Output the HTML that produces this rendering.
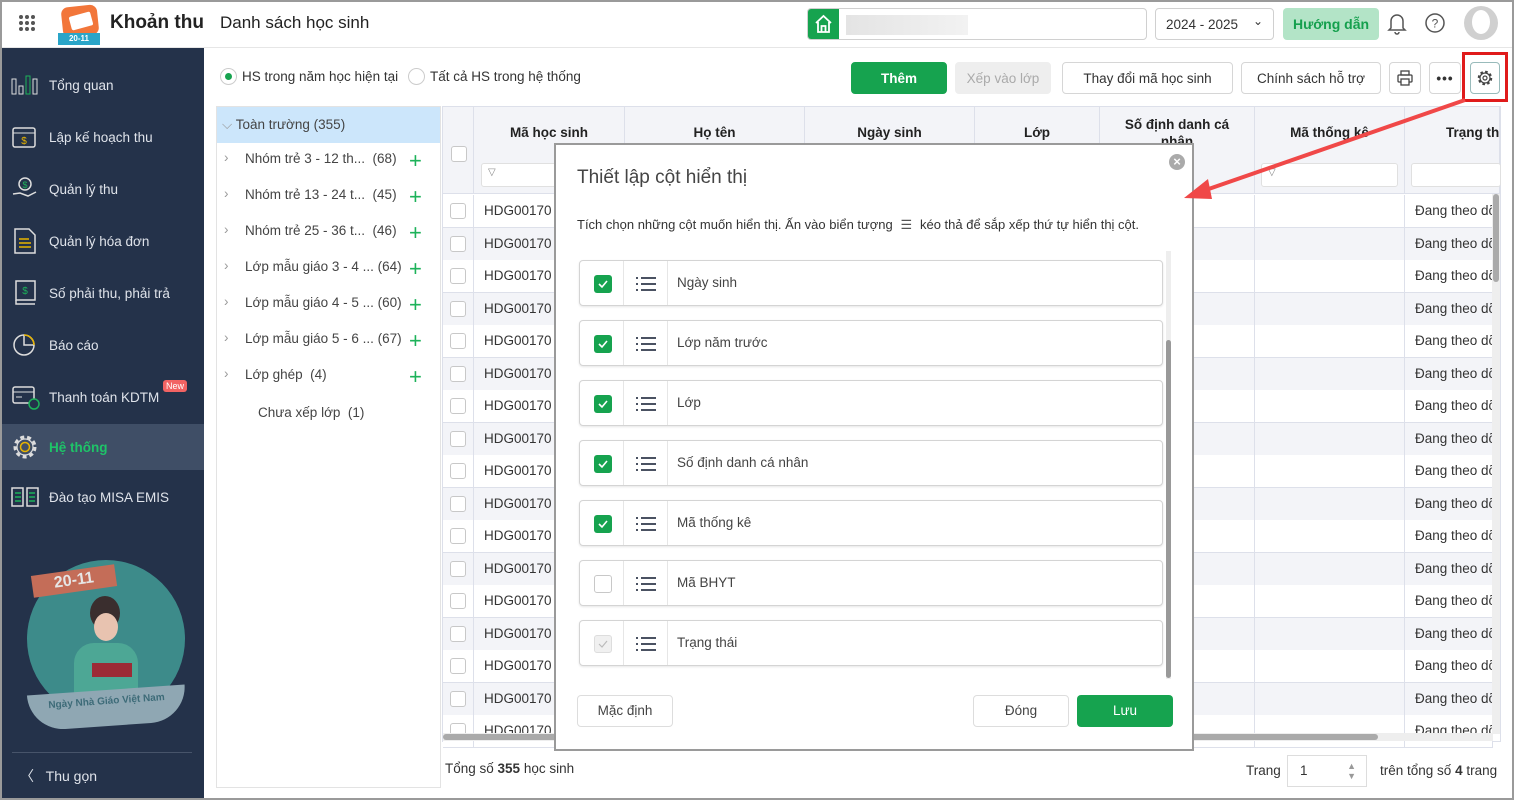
<!DOCTYPE html>
<html><head><meta charset="utf-8"><style>
*{box-sizing:border-box;margin:0;padding:0}
body{width:1514px;height:800px;overflow:hidden;font-family:"Liberation Sans",sans-serif;font-size:13px;color:#333;background:#fff;position:relative}
.frame{position:absolute;inset:0;border:2px solid #9a9a9a;pointer-events:none;z-index:50}
.abs{position:absolute}
.top{left:0;top:0;width:1514px;height:48px;background:#fff;border-bottom:1px solid #e6e6e6}
.side{left:2px;top:48px;width:202px;height:750px;background:#24324a;color:#dfe3ea;font-size:13.5px}
.nav{position:absolute;left:0;width:202px;height:46px;display:flex;align-items:center}
.nav span{position:absolute;left:47px}
.nav svg{position:absolute;left:8px}
.btn{position:absolute;height:32px;border:1px solid #d6d6d6;border-radius:4px;background:#fff;display:flex;align-items:center;justify-content:center;font-size:13.5px;color:#333}
.th{position:absolute;top:107px;height:87px;background:#f3f4f8;border-right:1px solid #dde0ea;border-bottom:1px solid #dde0ea;font-weight:bold;color:#222;font-size:13.5px;text-align:center}
.filt{position:absolute;top:163px;height:24px;background:#fff;border:1px solid #e0e0e0;border-radius:3px}
.row{position:absolute;left:443px;width:1050px;height:33px;border-bottom:1px solid #dde0ea}
.cell{position:absolute;top:0;height:32px;border-right:1px solid #dde0ea;line-height:32px;padding-left:10px;font-size:13.5px;color:#333;white-space:nowrap;overflow:hidden}
.cb{position:absolute;width:16px;height:16px;border:1px solid #c8c8c8;border-radius:3px;background:#fff}
.tree{position:absolute;left:230px;font-size:13.5px;color:#444}
.plus{position:absolute;left:409px;color:#1db25a;font-size:22px;font-weight:300;line-height:1}
.item{position:absolute;left:579px;width:584px;height:46px;border:1px solid #d4d4d4;border-radius:4px;background:#fff;box-shadow:0 1px 2px rgba(0,0,0,.1)}
.item .c1{position:absolute;left:0;top:0;width:44px;height:44px;border-right:1px solid #e6e6e6}
.item .c2{position:absolute;left:44px;top:0;width:44px;height:44px;border-right:1px solid #e6e6e6}
.item .t{position:absolute;left:97px;top:14px;font-size:13.5px;color:#444}
.gcb{position:absolute;left:14px;top:14px;width:18px;height:18px;border-radius:3px;background:#16a34f}
</style></head><body>
<div class="frame"></div>
<!-- top bar -->
<div class="abs top">
 <div class="abs" style="left:19px;top:15px;width:16px;height:16px;display:grid;grid-template-columns:repeat(3,4px);gap:2px">
  <i style="background:#555;border-radius:50%"></i><i style="background:#555;border-radius:50%"></i><i style="background:#555;border-radius:50%"></i><i style="background:#555;border-radius:50%"></i><i style="background:#555;border-radius:50%"></i><i style="background:#555;border-radius:50%"></i><i style="background:#555;border-radius:50%"></i><i style="background:#555;border-radius:50%"></i><i style="background:#555;border-radius:50%"></i></div>
 <div class="abs" style="left:62px;top:6px;width:36px;height:30px;background:#f2763a;border-radius:7px;transform:rotate(-6deg)"></div>
 <div class="abs" style="left:70px;top:14px;width:22px;height:14px;background:#fff;border-radius:2px;transform:rotate(-15deg)"></div>
 <div class="abs" style="left:58px;top:33px;width:42px;height:12px;background:#2aa5c8;color:#fff;font-size:8px;font-weight:bold;text-align:center;line-height:12px">20-11</div>
 <div class="abs" style="left:110px;top:12px;font-size:19px;font-weight:bold;color:#222">Khoản thu</div>
 <div class="abs" style="left:220px;top:13px;font-size:17px;color:#222">Danh sách học sinh</div>
 <div class="abs" style="left:807px;top:8px;width:340px;height:32px;border:1px solid #d0d0d0;border-radius:4px;overflow:hidden">
  <div class="abs" style="left:0;top:0;width:31px;height:30px;background:#16a34f"><svg width="31" height="30" viewBox="0 0 31 30"><path d="M8 14 L15.5 7 L23 14 M10 13 V23 H21 V13 M13.5 23 V17 H17.5 V23" stroke="#fff" stroke-width="1.8" fill="none"/></svg></div>
  <div class="abs" style="left:38px;top:6px;width:122px;height:20px;background:linear-gradient(90deg,#e4e4e4,#f2f2f2)"></div>
 </div>
 <div class="abs" style="left:1155px;top:8px;width:119px;height:32px;border:1px solid #d0d0d0;border-radius:4px;font-size:13.5px;padding:8px 0 0 10px">2024 - 2025<span style="position:absolute;right:10px;top:5px;font-size:12px">⌄</span></div>
 <div class="abs" style="left:1283px;top:8px;width:96px;height:32px;background:#b3e4c7;border-radius:4px;color:#15a04e;font-weight:bold;font-size:14px;text-align:center;line-height:32px">Hướng dẫn</div>
 <svg class="abs" style="left:1386px;top:11px" width="22" height="24" viewBox="0 0 22 24"><path d="M5 17 V10 a6 6 0 0 1 12 0 V17 L19 19 H3 Z M9 21 a2 2 0 0 0 4 0" stroke="#555" stroke-width="1.5" fill="none"/></svg>
 <svg class="abs" style="left:1424px;top:12px" width="22" height="22" viewBox="0 0 22 22"><circle cx="11" cy="11" r="9" stroke="#555" stroke-width="1.5" fill="none"/><text x="11" y="15.5" font-size="12" text-anchor="middle" fill="#555" font-family="Liberation Sans">?</text></svg>
 <div class="abs" style="left:1464px;top:6px;width:34px;height:34px;border-radius:50%;background:#d0d0d0;overflow:hidden"><div style="position:absolute;left:8px;top:4px;width:18px;height:24px;border-radius:50%;background:#fff"></div></div>
</div>
<!-- sidebar -->
<div class="abs side">
 <div class="nav" style="top:14px"><svg width="30" height="22" viewBox="0 0 30 22"><rect x="2" y="5" width="4" height="15" stroke="#ddd" fill="none"/><rect x="9" y="12" width="4" height="8" stroke="#ddd" fill="none"/><rect x="16" y="2" width="4" height="18" stroke="#1db25a" fill="none"/><rect x="23" y="5" width="4" height="15" stroke="#ddd" fill="none"/></svg><span>Tổng quan</span></div>
 <div class="nav" style="top:66px"><svg width="30" height="26" viewBox="0 0 30 26"><rect x="3" y="4" width="22" height="19" rx="2" stroke="#ddd" stroke-width="1.5" fill="none"/><path d="M3 9H25" stroke="#ddd"/><text x="14" y="20" font-size="10" text-anchor="middle" fill="#e8b400">$</text></svg><span>Lập kế hoạch thu</span></div>
 <div class="nav" style="top:118px"><svg width="30" height="26" viewBox="0 0 30 26"><circle cx="15" cy="8" r="6" stroke="#ddd" stroke-width="1.5" fill="none"/><text x="15" y="12" font-size="9" text-anchor="middle" fill="#1db25a">$</text><path d="M3 18 L10 17 L18 20 L26 16" stroke="#ddd" stroke-width="1.5" fill="none"/></svg><span>Quản lý thu</span></div>
 <div class="nav" style="top:170px"><svg width="30" height="28" viewBox="0 0 30 28"><path d="M5 2H19L25 8V26H5Z" stroke="#ddd" stroke-width="1.5" fill="none"/><path d="M9 12H19M9 16H21M9 20H21" stroke="#e8b400" stroke-width="1.5"/></svg><span>Quản lý hóa đơn</span></div>
 <div class="nav" style="top:222px"><svg width="30" height="28" viewBox="0 0 30 28"><rect x="6" y="2" width="19" height="19" stroke="#ddd" stroke-width="1.5" fill="none"/><path d="M6 21V25H25" stroke="#ddd" stroke-width="1.5" fill="none"/><text x="15" y="15" font-size="10" text-anchor="middle" fill="#1db25a">$</text></svg><span>Số phải thu, phải trả</span></div>
 <div class="nav" style="top:274px"><svg width="30" height="26" viewBox="0 0 30 26"><circle cx="14" cy="13" r="10" stroke="#ddd" stroke-width="1.5" fill="none"/><path d="M14 3V13H24" stroke="#ddd" stroke-width="1.5" fill="none"/><path d="M14 3A10 10 0 0 1 24 13" stroke="#e8b400" stroke-width="1.5" fill="none"/></svg><span>Báo cáo</span></div>
 <div class="nav" style="top:326px"><svg width="30" height="28" viewBox="0 0 30 28"><rect x="3" y="4" width="21" height="16" rx="2" stroke="#ddd" stroke-width="1.5" fill="none"/><path d="M3 9H24M6 14H12" stroke="#ddd"/><circle cx="24" cy="21" r="5" stroke="#1db25a" stroke-width="1.5" fill="#24324a"/></svg><span>Thanh toán KDTM</span><div style="position:absolute;left:161px;top:6px;background:#f26363;color:#fff;font-size:9px;padding:1px 3px;border-radius:3px">New</div></div>
 <div class="nav" style="top:376px;background:#3f4e66"><svg width="30" height="30" viewBox="0 0 30 30"><circle cx="15" cy="15" r="10" stroke="#ddd" stroke-width="3" stroke-dasharray="4 3" fill="none"/><circle cx="15" cy="15" r="8" stroke="#ddd" stroke-width="1.2" fill="none"/><circle cx="15" cy="15" r="4.5" stroke="#e8b400" stroke-width="1.5" fill="none"/></svg><span style="color:#1ec468;font-weight:bold">Hệ thống</span></div>
 <div class="nav" style="top:426px"><svg width="30" height="26" viewBox="0 0 30 26"><path d="M2 4H13V22H2Z M17 4H28V22H17Z" stroke="#ddd" stroke-width="1.5" fill="none"/><path d="M5 9H11M5 13H11M5 17H11M19 9H25M19 13H25M19 17H25" stroke="#1db25a" stroke-width="1.5"/></svg><span>Đào tạo MISA EMIS</span></div>
 <div class="abs" style="left:25px;top:512px;width:158px;height:158px;border-radius:50%;background:#3d8b8a"></div>
 <div class="abs" style="left:30px;top:522px;width:84px;height:22px;background:#c46d58;transform:rotate(-8deg);color:#e6e6e6;font-weight:bold;font-size:16px;text-align:center;line-height:22px">20-11</div>
 <div class="abs" style="left:88px;top:548px;width:30px;height:34px;border-radius:50%;background:#3a2e2e"></div>
 <div class="abs" style="left:92px;top:565px;width:24px;height:28px;border-radius:50%;background:#e8c3b0"></div>
 <div class="abs" style="left:72px;top:595px;width:64px;height:70px;border-radius:20px 20px 0 0;background:#4da795"></div>
 <div class="abs" style="left:90px;top:615px;width:40px;height:14px;background:#9c2b36"></div>
 <div class="abs" style="left:26px;top:642px;width:158px;height:36px;background:#8fa7b3;border-radius:0 0 80px 80px;color:#3d6b78;font-size:10px;text-align:center;padding-top:6px;font-weight:bold;transform:rotate(-4deg)">Ngày Nhà Giáo Việt Nam</div>
 <div class="abs" style="left:10px;top:704px;width:180px;height:1px;background:#47546a"></div>
 <div class="abs" style="left:18px;top:718px;font-size:14px;color:#dfe3ea">〈&nbsp;&nbsp;&nbsp;Thu gọn</div>
</div>
<!-- toolbar -->
<div class="abs" style="left:220px;top:68px;width:17px;height:17px;border:1px solid #ccc;border-radius:50%"><div style="position:absolute;left:4px;top:4px;width:7px;height:7px;border-radius:50%;background:#16a34f"></div></div>
<div class="abs" style="left:242px;top:69px;font-size:13.5px">HS trong năm học hiện tại</div>
<div class="abs" style="left:408px;top:68px;width:17px;height:17px;border:1px solid #ccc;border-radius:50%"></div>
<div class="abs" style="left:430px;top:69px;font-size:13.5px">Tất cả HS trong hệ thống</div>
<div class="btn" style="left:851px;top:62px;width:96px;background:#16a34f;border-color:#16a34f;color:#fff;font-weight:bold">Thêm</div>
<div class="btn" style="left:955px;top:62px;width:96px;background:#eee;border-color:#eee;color:#aaa">Xếp vào lớp</div>
<div class="btn" style="left:1062px;top:62px;width:171px">Thay đổi mã học sinh</div>
<div class="btn" style="left:1241px;top:62px;width:140px">Chính sách hỗ trợ</div>
<div class="btn" style="left:1389px;top:62px;width:32px"><svg width="18" height="18" viewBox="0 0 18 18"><rect x="5" y="2" width="8" height="4" stroke="#444" fill="none" stroke-width="1.3"/><rect x="2" y="6" width="14" height="7" rx="1" stroke="#444" fill="none" stroke-width="1.3"/><rect x="5" y="10" width="8" height="6" stroke="#444" fill="#fff" stroke-width="1.3"/></svg></div>
<div class="btn" style="left:1429px;top:62px;width:32px;font-weight:bold;letter-spacing:1px">•••</div>
<div class="btn" style="left:1470px;top:62px;width:30px;border-color:#9bb"><svg width="18" height="18" viewBox="0 0 18 18"><circle cx="9" cy="9" r="6" stroke="#444" stroke-width="2.5" stroke-dasharray="2.5 2.2" fill="none"/><circle cx="9" cy="9" r="5" stroke="#444" stroke-width="1.2" fill="none"/><circle cx="9" cy="9" r="2" stroke="#444" stroke-width="1.2" fill="none"/></svg></div>
<div class="abs" style="left:1462px;top:52px;width:46px;height:50px;border:3px solid #e01b1b"></div>
<!-- tree -->
<div class="abs" style="left:216px;top:106px;width:225px;height:682px;border:1px solid #e3e3e3;background:#fff"></div>
<div class="abs" style="left:217px;top:107px;width:223px;height:36px;background:#cce6fb"></div>
<div class="abs" style="left:222px;top:117px;font-size:13.5px;color:#444"><span style="color:#999">⌵</span> Toàn trường (355)</div>
<div class="tree" style="top:150px;left:224px;color:#999">›</div><div class="tree" style="top:151px;left:245px">Nhóm trẻ 3 - 12 th...&nbsp;&nbsp;(68)</div><div class="plus" style="top:150px">+</div>
<div class="tree" style="top:186px;left:224px;color:#999">›</div><div class="tree" style="top:187px;left:245px">Nhóm trẻ 13 - 24 t...&nbsp;&nbsp;(45)</div><div class="plus" style="top:186px">+</div>
<div class="tree" style="top:222px;left:224px;color:#999">›</div><div class="tree" style="top:223px;left:245px">Nhóm trẻ 25 - 36 t...&nbsp;&nbsp;(46)</div><div class="plus" style="top:222px">+</div>
<div class="tree" style="top:258px;left:224px;color:#999">›</div><div class="tree" style="top:259px;left:245px">Lớp mẫu giáo 3 - 4 ... (64)</div><div class="plus" style="top:258px">+</div>
<div class="tree" style="top:294px;left:224px;color:#999">›</div><div class="tree" style="top:295px;left:245px">Lớp mẫu giáo 4 - 5 ... (60)</div><div class="plus" style="top:294px">+</div>
<div class="tree" style="top:330px;left:224px;color:#999">›</div><div class="tree" style="top:331px;left:245px">Lớp mẫu giáo 5 - 6 ... (67)</div><div class="plus" style="top:330px">+</div>
<div class="tree" style="top:366px;left:224px;color:#999">›</div><div class="tree" style="top:367px;left:245px">Lớp ghép&nbsp; (4)</div><div class="plus" style="top:366px">+</div>
<div class="tree" style="top:405px;left:258px">Chưa xếp lớp&nbsp; (1)</div>
<!-- table -->
<div class="abs" style="left:442px;top:106px;width:1059px;height:636px;border:1px solid #dde0ea"></div>
<div class="th" style="left:443px;width:31px"><div class="cb" style="left:8px;top:39px"></div></div>
<div class="th" style="left:474px;width:151px;padding-top:18px">Mã học sinh</div>
<div class="th" style="left:625px;width:180px;padding-top:18px">Họ tên</div>
<div class="th" style="left:805px;width:170px;padding-top:18px">Ngày sinh</div>
<div class="th" style="left:975px;width:125px;padding-top:18px">Lớp</div>
<div class="th" style="left:1100px;width:155px;padding-top:9px;line-height:17px">Số định danh cá<br>nhân</div>
<div class="th" style="left:1255px;width:150px;padding-top:18px">Mã thống kê</div>
<div class="th" style="left:1405px;width:95px;padding-top:18px;text-align:left;padding-left:41px;white-space:nowrap;overflow:hidden">Trạng thái</div>
<div class="filt" style="left:481px;width:140px;font-size:10px;color:#888;padding:3px 6px">▽</div>
<div class="filt" style="left:1261px;width:137px;font-size:10px;color:#888;padding:3px 6px">▽</div>
<div class="filt" style="left:1411px;width:90px"></div>
<div id="rows"></div>
<script>
var h='';for(var i=0;i<17;i++){var y=195+i*32.5;var bg=i%2?'#f3f4f8':'#fff';
h+='<div class="row" style="top:'+y+'px;background:'+bg+'"><div class="cell" style="left:0;width:31px"><div class="cb" style="left:7px;top:8px"></div></div><div class="cell" style="left:31px;width:151px">HDG00170</div><div class="cell" style="left:182px;width:180px"></div><div class="cell" style="left:362px;width:170px"></div><div class="cell" style="left:532px;width:125px"></div><div class="cell" style="left:657px;width:155px"></div><div class="cell" style="left:812px;width:150px"></div><div class="cell" style="left:962px;width:88px">Đang theo dõi</div></div>';}
document.getElementById('rows').innerHTML=h;
</script>
<div class="abs" style="left:443px;top:733px;width:1050px;height:8px;background:#eee"></div>
<div class="abs" style="left:443px;top:734px;width:935px;height:6px;background:#aaa;border-radius:3px"></div>
<div class="abs" style="left:1492px;top:194px;width:8px;height:540px;background:#eee"></div>
<div class="abs" style="left:1493px;top:194px;width:6px;height:88px;background:#aaa;border-radius:3px"></div>
<div class="abs" style="left:445px;top:761px;font-size:13.5px">Tổng số <b>355</b> học sinh</div>
<div class="abs" style="left:1246px;top:763px;font-size:13.5px">Trang</div>
<div class="abs" style="left:1287px;top:755px;width:80px;height:32px;border:1px solid #ddd;padding:7px 12px;font-size:13.5px">1<span style="position:absolute;right:10px;top:5px;color:#999;font-size:9px;line-height:10px">▲<br>▼</span></div>
<div class="abs" style="left:1380px;top:763px;font-size:13.5px">trên tổng số <b>4</b> trang</div>
<!-- arrow -->
<svg class="abs" style="left:1180px;top:95px;z-index:5" width="290" height="110" viewBox="0 0 290 110"><path d="M285 5 L20 97" stroke="#f04848" stroke-width="4"/><path d="M4 103 L28 84 L32 104 Z" fill="#f04848"/></svg>
<!-- modal -->
<div class="abs" style="left:554px;top:143px;width:640px;height:608px;background:#fff;border:2px solid #9a9a9a;z-index:3">
 <div class="abs" style="left:613px;top:9px;width:16px;height:16px;border-radius:50%;background:#aaa;color:#fff;font-size:13px;text-align:center;line-height:16px;font-weight:bold">×</div>
 <div class="abs" style="left:21px;top:22px;font-size:19px;color:#444">Thiết lập cột hiển thị</div>
 <div class="abs" style="left:21px;top:72px;font-size:13px;color:#333;white-space:nowrap">Tích chọn những cột muốn hiển thị. Ấn vào biển tượng <span style="display:inline-block;width:20px;text-align:center;color:#555">☰</span> kéo thả để sắp xếp thứ tự hiển thị cột.</div>
 <div class="abs" style="left:610px;top:106px;width:5px;height:428px;background:#eee"></div>
 <div class="abs" style="left:610px;top:195px;width:5px;height:338px;background:#999;border-radius:3px"></div>
 <div class="abs" style="left:21px;top:550px;width:96px;height:32px;border:1px solid #ddd;border-radius:4px;text-align:center;line-height:30px;font-size:13.5px;color:#444">Mặc định</div>
 <div class="abs" style="left:417px;top:550px;width:96px;height:32px;border:1px solid #ddd;border-radius:4px;text-align:center;line-height:30px;font-size:13.5px;color:#444">Đóng</div>
 <div class="abs" style="left:521px;top:550px;width:96px;height:32px;background:#16a34f;border-radius:4px;text-align:center;line-height:32px;font-size:13.5px;color:#fff">Lưu</div>
</div>
<div id="items" style="position:absolute;left:0;top:0;z-index:4"></div>
<script>
var n=['Ngày sinh','Lớp năm trước','Lớp','Số định danh cá nhân','Mã thống kê','Mã BHYT','Trạng thái'];var s='';
var ic='<svg width="22" height="16" viewBox="0 0 22 16" style="position:absolute;left:11px;top:15px"><path d="M1 2h2M6 2h15M1 8h2M6 8h15M1 14h2M6 14h15" stroke="#4a5262" stroke-width="2"/></svg>';
for(var i=0;i<7;i++){var y=260+i*60;var c;
if(i<5)c='<div class="gcb"><svg width="18" height="18" viewBox="0 0 18 18"><path d="M5 9l3 3 5-6" stroke="#fff" stroke-width="1.6" fill="none"/></svg></div>';
else if(i==5)c='<div class="cb" style="left:14px;top:14px;width:18px;height:18px"></div>';
else c='<div class="cb" style="left:14px;top:14px;width:18px;height:18px;background:#f0f0f0;border-color:#ddd"><svg width="16" height="16" viewBox="0 0 16 16"><path d="M4 8l3 3 5-6" stroke="#bbb" stroke-width="1.2" fill="none"/></svg></div>';
s+='<div class="item" style="top:'+y+'px"><div class="c1">'+c+'</div><div class="c2">'+ic+'</div><div class="t">'+n[i]+'</div></div>';}
document.getElementById('items').innerHTML=s;
</script>
</body></html>
